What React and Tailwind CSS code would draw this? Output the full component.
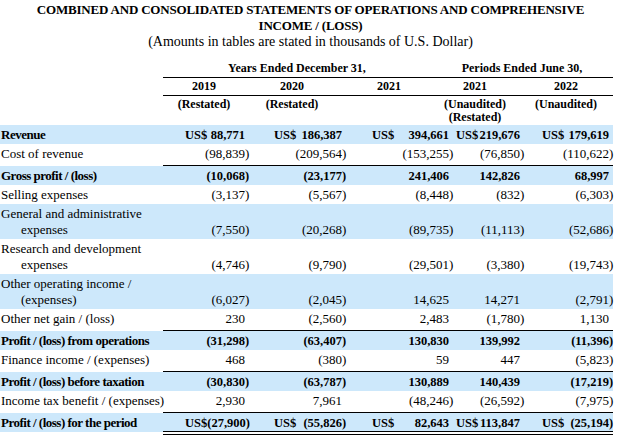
import React from 'react';

const cols = 'grid grid-cols-[163px_86px_97px_107px_71px_89px]';
const curMl = ['ml-[22px]', 'ml-[25px]', 'ml-[26px]', 'ml-[3px]', 'ml-[18px]'];

const rows = [
  { label: 'Revenue', bold: true, bg: true, cur: true, vals: ['88,771', '186,387', '394,661', '219,676', '179,619'] },
  { label: 'Cost of revenue', line: true, vals: ['(98,839)', '(209,564)', '(153,255)', '(76,850)', '(110,622)'] },
  { label: 'Gross profit / (loss)', bold: true, bg: true, vals: ['(10,068)', '(23,177)', '241,406', '142,826', '68,997'] },
  { label: 'Selling expenses', vals: ['(3,137)', '(5,567)', '(8,448)', '(832)', '(6,303)'] },
  { label: ['General and administrative', 'expenses'], bg: true, vals: ['(7,550)', '(20,268)', '(89,735)', '(11,113)', '(52,686)'] },
  { label: ['Research and development', 'expenses'], vals: ['(4,746)', '(9,790)', '(29,501)', '(3,380)', '(19,743)'] },
  { label: ['Other operating income /', '(expenses)'], bg: true, vals: ['(6,027)', '(2,045)', '14,625', '14,271', '(2,791)'] },
  { label: 'Other net gain / (loss)', line: true, vals: ['230', '(2,560)', '2,483', '(1,780)', '1,130'] },
  { label: 'Profit / (loss) from operations', bold: true, bg: true, vals: ['(31,298)', '(63,407)', '130,830', '139,992', '(11,396)'] },
  { label: 'Finance income / (expenses)', line: true, vals: ['468', '(380)', '59', '447', '(5,823)'] },
  { label: 'Profit / (loss) before taxation', bold: true, bg: true, vals: ['(30,830)', '(63,787)', '130,889', '140,439', '(17,219)'] },
  { label: 'Income tax benefit / (expenses)', line: true, vals: ['2,930', '7,961', '(48,246)', '(26,592)', '(7,975)'] },
  { label: 'Profit / (loss) for the period', bold: true, bg: true, cur: true, double: true, vals: ['(27,900)', '(55,826)', '82,643', '113,847', '(25,194)'] },
];

function Val({ v, cur, bold, i }) {
  const paren = v.endsWith(')');
  const core = paren ? v.slice(0, -1) : v;
  return (
    <div
      className={`flex ${cur ? 'justify-between' : 'justify-end'} whitespace-nowrap ${bold ? 'text-[12.5px]' : 'text-[13px]'}`}
    >
      {cur && <span className={curMl[i]}>US$</span>}
      <span>
        {core}
        <span className="inline-block w-[4px]">{paren ? ')' : ''}</span>
      </span>
    </div>
  );
}

function Row({ row }) {
  const multi = Array.isArray(row.label);
  const h = multi ? 'h-[35px]' : row.line ? 'h-[22px]' : 'h-[19px]';
  return (
    <div className={`${cols} ${h} ${row.bg ? 'bg-[#cde8fb]' : ''} ${row.bold ? 'font-bold' : ''}`}>
      <div
        className={`pt-[2px] pl-[1px] leading-[16px] text-[13px] ${multi ? '' : 'whitespace-nowrap'} ${row.bold ? 'tracking-[-0.5px]' : ''}`}
      >
        {multi ? (
          <>
            <div>{row.label[0]}</div>
            <div className="pl-[20px]">{row.label[1]}</div>
          </>
        ) : (
          row.label
        )}
      </div>
      {row.vals.map((v, i) => (
        <div
          key={i}
          className={`leading-[16px] ${multi ? 'pt-[18px]' : 'pt-[2px]'} ${row.line ? 'border-b border-black' : ''} ${row.double ? 'border-b-[4px] border-double border-black' : ''}`}
        >
          <Val v={v} cur={row.cur} bold={row.bold} i={i} />
        </div>
      ))}
    </div>
  );
}

export default function App() {
  return (
    <div className="font-serif">
      <div className="w-[621px] h-[438px] bg-white text-black font-['Liberation_Serif'] overflow-hidden">
        {/* --- Title --- */}
        <div className="pt-[2px] text-center leading-[16px]">
          <div className="font-bold text-[13px] tracking-[-0.2px]">
            COMBINED AND CONSOLIDATED STATEMENTS OF OPERATIONS AND COMPREHENSIVE
          </div>
          <div className="font-bold text-[13px] tracking-[-0.2px]">INCOME / (LOSS)</div>
          <div className="text-[14px]">(Amounts in tables are stated in thousands of U.S. Dollar)</div>
        </div>

        {/* --- Column headers --- */}
        <div className="w-[613px] font-bold text-[12px] leading-[16px]">
          <div className="mt-[10px] flex">
            <div className="w-[163px]" />
            <div className="w-[268px] pb-[1px] text-center border-b border-black">Years Ended December 31,</div>
            <div className="flex-1 pb-[1px] text-center border-b border-black">Periods Ended June 30,</div>
          </div>
          <div className="flex">
            <div className="w-[163px]" />
            <div className="flex flex-1 pb-[1px] text-center border-b border-black">
              <div className="w-[82px]">2019</div>
              <div className="w-[94px]">2020</div>
              <div className="w-[100px]">2021</div>
              <div className="w-[72px]">2021</div>
              <div className="flex-1 pl-[8px]">2022</div>
            </div>
          </div>
          <div className="flex h-[29px] pt-[2px] leading-[13px] text-center">
            <div className="w-[163px]" />
            <div className="w-[82px]">(Restated)</div>
            <div className="w-[94px]">(Restated)</div>
            <div className="w-[100px]" />
            <div className="w-[72px] whitespace-nowrap">
              <div>(Unaudited)</div>
              <div>(Restated)</div>
            </div>
            <div className="flex-1 pl-[8px]">(Unaudited)</div>
          </div>
        </div>

        {/* --- Statement rows --- */}
        <div className="w-[613px]">
          {rows.map((row, idx) => (
            <Row key={idx} row={row} />
          ))}
        </div>
      </div>
    </div>
  );
}
